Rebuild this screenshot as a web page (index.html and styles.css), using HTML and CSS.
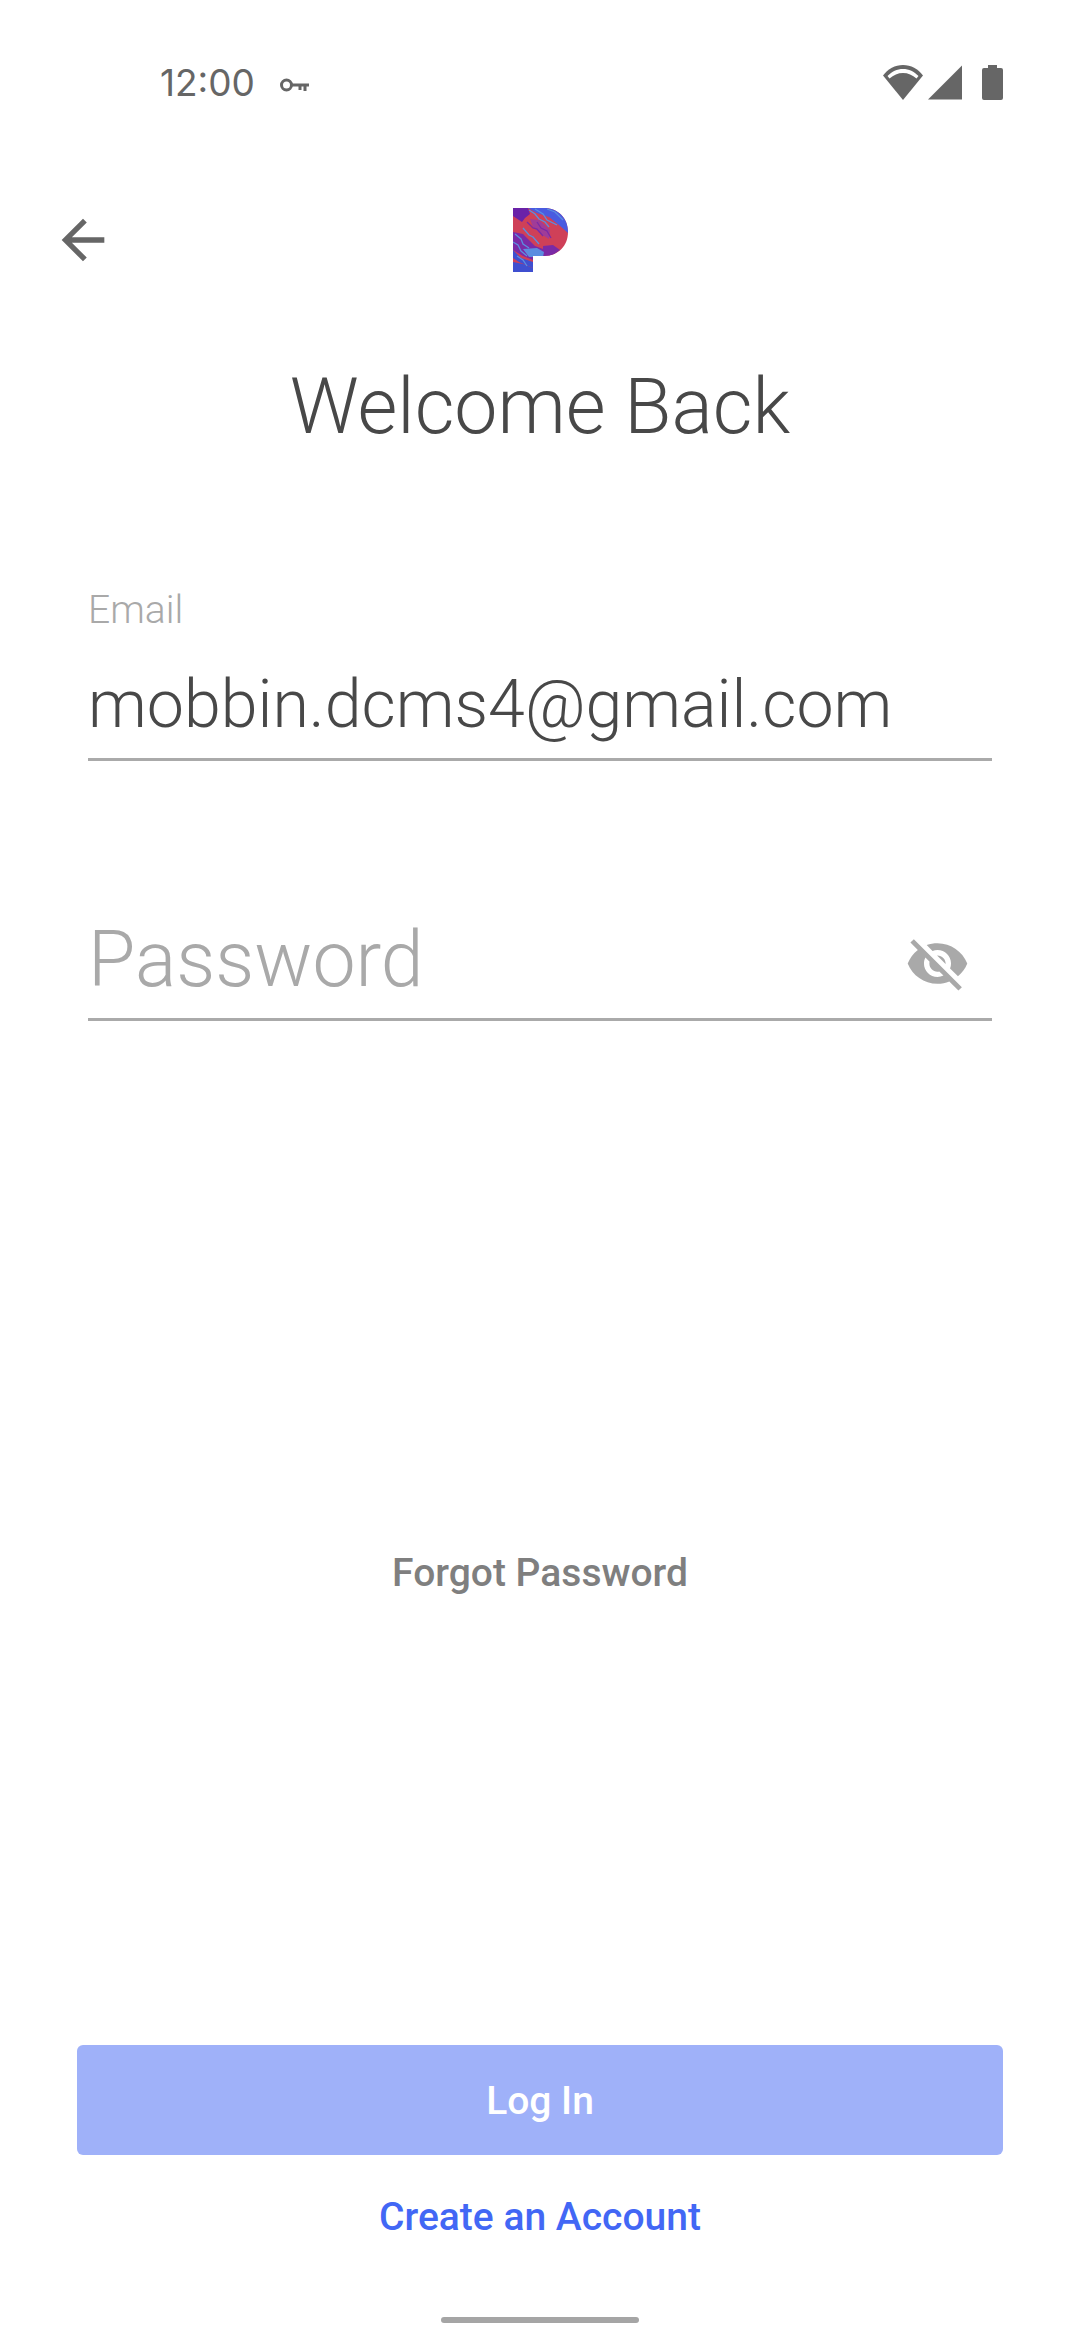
FILE: index.html
```html
<!DOCTYPE html>
<html lang="en">
<head>
    <meta charset="UTF-8">
    <meta name="viewport" content="width=device-width, initial-scale=1.0">
    <title>Welcome Back</title>
    <link rel="stylesheet" href="styles.css">
</head>
<body>
    <div class="screen">
        <div class="status-bar">
            <span class="clock">12:00</span>
            <svg class="key-icon" width="29" height="14" viewBox="0 0 29 14">
                <circle cx="6.500" cy="7" r="5" fill="none" stroke="#666" stroke-width="3"/>
                <path d="M11 5.500h18v3h-2.500V13h-3V8.500h-2V12h-3V8.500H11z" fill="#666"/>
            </svg>
            <div class="status-icons">
                <svg width="40" height="35" viewBox="0 0 40 35">
                    <path d="M20 35 0 10.500C5 4 12 0 20 0s15 4 20 10.500z" fill="#666"/>
                    <path d="M4.500 11C9 6.500 14 4 20 4s11 2.500 15.500 7l-2 2.500C29.500 10 25 8 20 8S10.500 10 6.500 13.500z" fill="#fff"/>
                </svg>
                <svg width="34" height="35" viewBox="0 0 34 35">
                    <path d="M34 .5V34.500H0z" fill="#666"/>
                </svg>
                <svg class="battery" width="21" height="35" viewBox="0 0 21 35">
                    <path d="M6 0h9v3h4a2 2 0 0 1 2 2v28a2 2 0 0 1-2 2H2a2 2 0 0 1-2-2V5a2 2 0 0 1 2-2h4z" fill="#666"/>
                </svg>
            </div>
        </div>

        <div class="top-nav">
            <svg class="back" width="64" height="64" viewBox="0 0 24 24">
                <path d="M20 11H7.830l5.590-5.590L12 4l-8 8 8 8 1.410-1.410L7.830 13H20z" fill="#666"/>
            </svg>
            <svg class="logo" width="56" height="64" viewBox="0 0 56 64">
                <defs>
                    <clipPath id="pshape">
                        <path d="M0 0H31C45 0 55 10 55 24S45 48 31 48H20V64H0z"/>
                    </clipPath>
                </defs>
                <g clip-path="url(#pshape)">
                    <rect width="56" height="64" fill="#cf4058"/>
                    <path d="M0 0H15L17 6 12 10 9 14 0 8z" fill="#6a22a8"/>
                    <path d="M15 0H56V26L46 17 36 9 24 5z" fill="#4a5be0"/>
                    <path d="M17 11 26 12 37 22 36 31 28 26 20 19z" fill="#a03c98"/>
                    <path d="M0 24 10 26 22 38 30 41 30 48H20V52L10 48 0 42z" fill="#7a2aa6"/>
                    <path d="M30 38 40 37 47 42 36 50H30z" fill="#7a2aa6"/>
                    <path d="M10 41 24 40 31 44 30 49H16z" fill="#5b8de0"/>
                    <path d="M0 54 10 56 20 60V64H0z" fill="#3f4fd0"/>
                    <path d="M0 42 8 50 20 54V60L6 54 0 50z" fill="#3f4fd0"/>
                    <path d="M2 26 8 31 10 36 16 40M10 20 16 27 20 29 26 36M0 34 5 37 8 43 14 48M16 2 22 6 26 11 32 14 36 19M22 1 30 6 34 12 44 17M34 1 42 4 50 12M4 48 10 52 14 58" fill="none" stroke="#5b8de0" stroke-width="1.300"/>
                    <path d="M14 14 20 20 24 21 30 28M24 14 28 20 34 23 38 30" fill="none" stroke="#7a2aa6" stroke-width="1.300"/>
                </g>
            </svg>
        </div>

        <h1 class="title">Welcome Back</h1>

        <div class="field field-email">
            <label class="field-label">Email</label>
            <div class="field-value">mobbin.dcms4@gmail.com</div>
        </div>

        <div class="field field-password">
            <div class="placeholder">Password</div>
            <svg class="eye" width="65" height="65" viewBox="0 0 24 24">
                <path d="M12 7c2.760 0 5 2.240 5 5 0 .65-.13 1.260-.36 1.830l2.920 2.920c1.510-1.260 2.700-2.890 3.430-4.750-1.730-4.390-6-7.500-11-7.500-1.400 0-2.740.25-3.980.7l2.160 2.160C10.740 7.130 11.350 7 12 7zM2 4.270l2.280 2.280.46.46C3.080 8.300 1.780 10.020 1 12c1.730 4.390 6 7.500 11 7.500 1.550 0 3.030-.3 4.380-.84l.42.42L19.730 22 21 20.730 3.270 3 2 4.270zM7.530 9.800l1.550 1.550c-.05.21-.08.43-.08.65 0 1.660 1.340 3 3 3 .22 0 .44-.03.65-.08l1.550 1.550c-.67.33-1.410.53-2.200.53-2.760 0-5-2.240-5-5 0-.79.2-1.530.53-2.200zm4.310-.78l3.150 3.150.02-.16c0-1.660-1.340-3-3-3l-.17.010z" fill="#a9a9a9"/>
            </svg>
        </div>

        <a class="forgot">Forgot Password</a>

        <div class="actions">
            <button class="login">Log In</button>
            <a class="create">Create an Account</a>
        </div>

        <div class="home-bar"></div>
    </div>
</body>
</html>
```

FILE: styles.css
```css
* {
    box-sizing: border-box;
}

body {
    margin: 0;
    background-color: #fff;
    font-family: Roboto, sans-serif;
}

.screen {
    width: 1080px;
    height: 2340px;
    display: flex;
    flex-direction: column;
    overflow: hidden;
}

.status-bar {
    height: 76px;
    margin-top: 44px;
    padding: 0 77px 0 160px;
    display: flex;
    align-items: center;
}

.clock {
    font-family: Inter, Roboto, sans-serif;
    font-size: 37px;
    color: #666;
}

.key-icon {
    margin-left: 25px;
    margin-top: 5px;
}

.status-icons {
    margin-left: auto;
    display: flex;
    align-items: flex-end;
    gap: 5px;
}

.battery {
    margin-left: 15px;
}

.top-nav {
    height: 128px;
    position: relative;
    display: flex;
    justify-content: center;
    align-items: center;
    margin-top: 56px;
}

.logo {
    margin-left: 2px;
}

.back {
    position: absolute;
    left: 51px;
    top: 32px;
}

.title {
    margin: 55px 0 0;
    font-size: 77px;
    font-weight: 300;
    line-height: 96px;
    text-align: center;
    color: #484848;
}

.field {
    margin: 0 88px;
    border-bottom: 3px solid #aaa;
    position: relative;
}

.field-email {
    margin-top: 133px;
    height: 173px;
}

.field-label {
    display: block;
    font-size: 39px;
    font-weight: 300;
    line-height: 44px;
    color: #a9a9a9;
}

.field-value {
    margin-top: 32px;
    font-size: 66.300px;
    font-weight: 300;
    line-height: 80px;
    color: #484848;
}

.field-password {
    margin-top: 160px;
    height: 100px;
}

.placeholder {
    font-size: 77px;
    font-weight: 300;
    line-height: 78px;
    color: #a9a9a9;
}

.eye {
    position: absolute;
    right: 22px;
    top: 10px;
}

.forgot {
    margin-top: 530px;
    font-size: 39px;
    font-weight: 500;
    line-height: 44px;
    text-align: center;
    color: #7f7f7f;
}

.actions {
    margin-top: auto;
    padding: 0 77px;
    display: flex;
    flex-direction: column;
    align-items: center;
}

.login {
    width: 100%;
    height: 110px;
    padding-top: 2px;
    border: none;
    border-radius: 6px;
    background-color: #9fb1f9;
    color: #fff;
    font-family: inherit;
    font-size: 39px;
    font-weight: 500;
}

.create {
    margin-top: 38px;
    font-size: 39px;
    font-weight: 500;
    line-height: 48px;
    color: #4267f5;
}

.home-bar {
    width: 198px;
    height: 6px;
    margin: 76px auto 17px;
    border-radius: 3px;
    background-color: #a5a5a5;
}
```
